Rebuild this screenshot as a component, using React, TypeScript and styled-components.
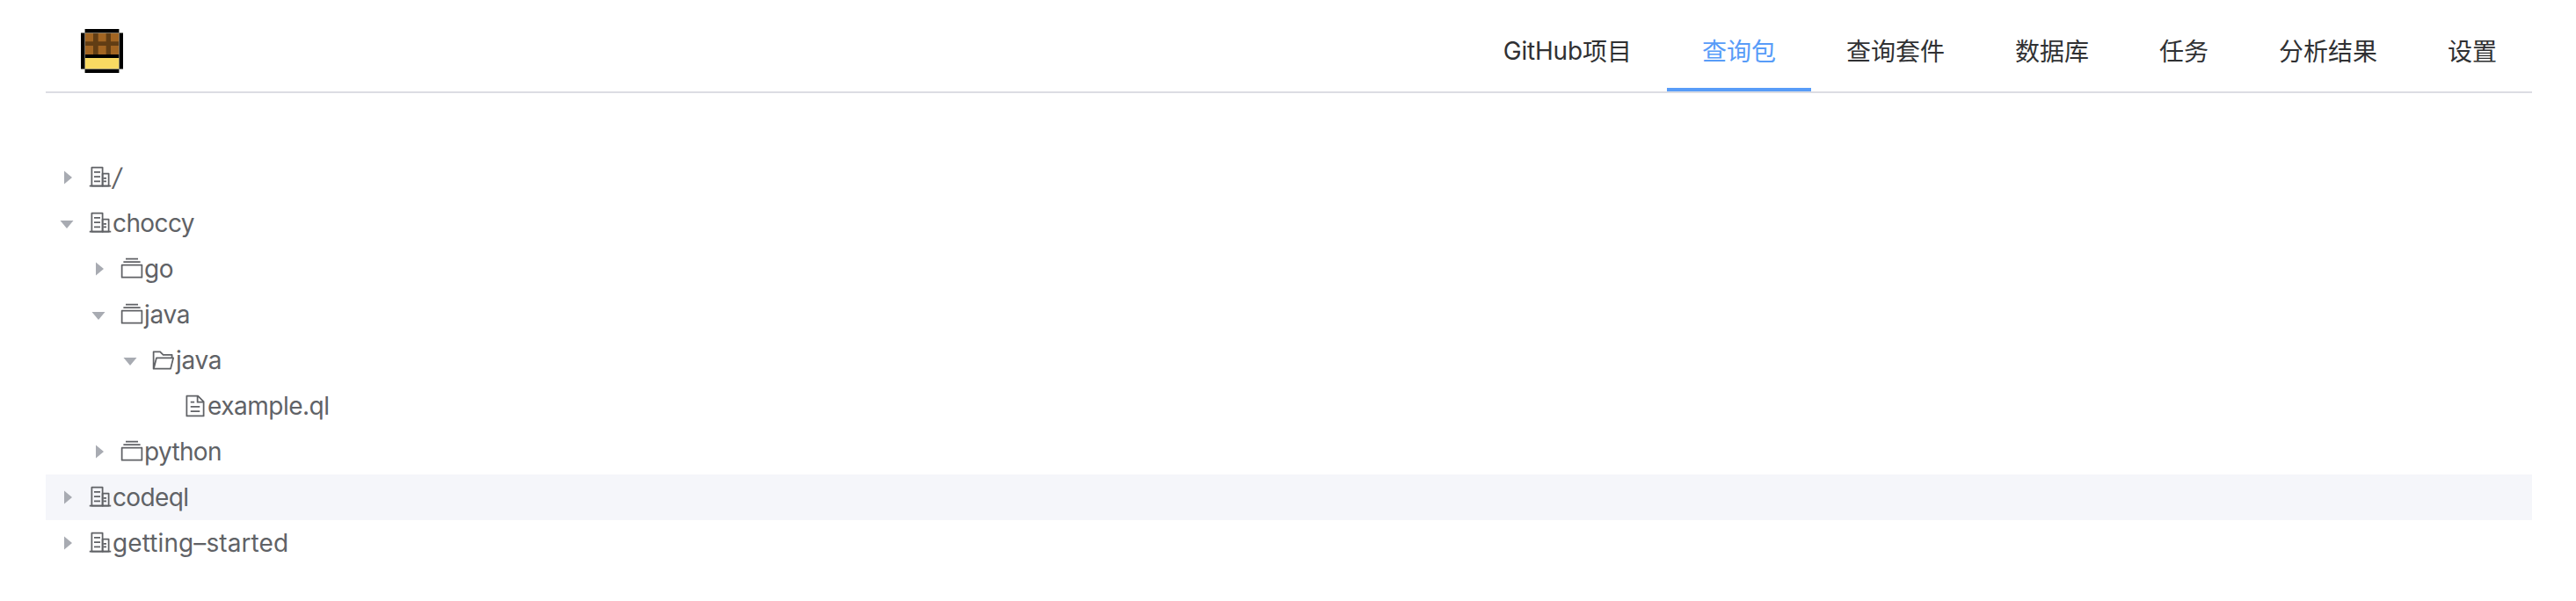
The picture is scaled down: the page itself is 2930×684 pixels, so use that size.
import React from 'react';
import styled, { createGlobalStyle, css } from 'styled-components';

const GlobalStyle = createGlobalStyle`
  body {
    margin: 0;
    background: #fff;
    font-family: Inter, 'Noto Sans CJK SC', sans-serif;
    -webkit-font-smoothing: antialiased;
  }
`;

const Page = styled.div`
  min-height: 684px;
  padding: 0 50px 0 52px;
  box-sizing: border-box;
`;

const Header = styled.header`
  display: flex;
  align-items: stretch;
  justify-content: space-between;
  height: 106px;
  box-sizing: border-box;
  border-bottom: 2px solid #dcdde3;
`;

const Brand = styled.a`
  display: block;
  padding: 33px 0 0 40px;
`;

const Menu = styled.nav`
  display: flex;
`;

const MenuItem = styled.a<{ $active?: boolean }>`
  display: flex;
  align-items: center;
  box-sizing: border-box;
  height: 104px;
  padding: 17px 40px 0;
  border-bottom: 4px solid ${(p) => (p.$active ? '#589cf8' : 'transparent')};
  color: ${(p) => (p.$active ? '#589cf8' : '#303133')};
  font-size: 28px;
  line-height: 40px;
  white-space: nowrap;
`;

const Latin = styled.span`
  letter-spacing: -0.2px;
  padding-bottom: 2px;
`;

const Tree = styled.div`
  margin-top: 70px;
  color: #606266;
`;

const TreeRow = styled.div<{ $level: number; $hover?: boolean }>`
  display: flex;
  align-items: center;
  height: 52px;
  padding-left: ${(p) => p.$level * 36}px;
  background: ${(p) => (p.$hover ? '#f5f6fa' : 'transparent')};
`;

const Caret = styled.svg<{ $open?: boolean; $leaf?: boolean }>`
  flex: none;
  width: 24px;
  height: 24px;
  padding: 12px;
  fill: #a8abb2;
  ${(p) => p.$open && css`transform: rotate(90deg);`}
  ${(p) => p.$leaf && css`visibility: hidden;`}
`;

const NodeIcon = styled.svg`
  flex: none;
  width: 28px;
  height: 28px;
  fill: currentColor;
`;

const Label = styled.span<{ $tracking: number; $slanted?: boolean }>`
  font-size: 28px;
  line-height: 40px;
  letter-spacing: ${(p) => p.$tracking}px;
  font-style: ${(p) => (p.$slanted ? 'italic' : 'normal')};
  white-space: nowrap;
`;

const icons = {
  building: [
    'M192 128v704h384V128zm-32-64h448a32 32 0 0 1 32 32v768a32 32 0 0 1-32 32H160a32 32 0 0 1-32-32V96a32 32 0 0 1 32-32',
    'M256 256h256v64H256zm0 192h256v64H256zm0 192h256v64H256zm384-128h128v64H640zm0 128h128v64H640zM64 832h896v64H64z',
    'M640 384v448h192V384zm-32-64h256a32 32 0 0 1 32 32v512a32 32 0 0 1-32 32H608a32 32 0 0 1-32-32V352a32 32 0 0 1 32-32',
  ],
  files: [
    'M128 384v448h768V384zm-32-64h832a32 32 0 0 1 32 32v512a32 32 0 0 1-32 32H96a32 32 0 0 1-32-32V352a32 32 0 0 1 32-32m64-128h704v64H160zm96-128h512v64H256z',
  ],
  folder: [
    'M878.08 448H241.92l-96 384h636.16zM832 384v-64H485.76L357.504 192H128v448l57.92-231.744A32 32 0 0 1 216.96 384zm-24.96 512H96a32 32 0 0 1-32-32V160a32 32 0 0 1 32-32h287.872l128.384 128H864a32 32 0 0 1 32 32v96h23.04a32 32 0 0 1 31.04 39.744l-112 448A32 32 0 0 1 807.04 896',
  ],
  document: [
    'M832 384H576V128H192v768h640zm-26.496-64L640 154.496V320zM160 64h480l256 256v608a32 32 0 0 1-32 32H160a32 32 0 0 1-32-32V96a32 32 0 0 1 32-32m160 448h384v64H320zm0-192h160v64H320zm0 384h384v64H320z',
  ],
};

interface TreeNode {
  label: string;
  icon: keyof typeof icons;
  level: number;
  tracking: number;
  open?: boolean;
  leaf?: boolean;
  hover?: boolean;
}

const nodes: TreeNode[] = [
  { label: '/', icon: 'building', level: 0, tracking: 0 },
  { label: 'choccy', icon: 'building', level: 0, tracking: -0.6, open: true },
  { label: 'go', icon: 'files', level: 1, tracking: -0.5 },
  { label: 'java', icon: 'files', level: 1, tracking: -0.3, open: true },
  { label: 'java', icon: 'folder', level: 2, tracking: -0.3, open: true },
  { label: 'example.ql', icon: 'document', level: 3, tracking: -0.5, leaf: true },
  { label: 'python', icon: 'files', level: 1, tracking: -0.65 },
  { label: 'codeql', icon: 'building', level: 0, tracking: -0.65, hover: true },
  { label: 'getting–started', icon: 'building', level: 0, tracking: 0.1 },
];

const menu = ['查询包', '查询套件', '数据库', '任务', '分析结果', '设置'];

function Logo() {
  return (
    <svg width="48" height="50" viewBox="0 0 144 150" display="block">
      <path fill="#000" d="M14 0h116v150H14zM0 13h144v124H0z" />
      <path fill="#a26522" d="M14 13h117v74H14z" />
      <path fill="#613d14" d="M42 13h17v74H42zM86 13h16v74H86zM14 43h117v14H14z" />
      <path fill="#f9da62" d="M14 99h117v38H14z" />
      <path
        fill="none"
        stroke="#888880"
        strokeWidth="3"
        strokeOpacity=".75"
        d="M0 13.5h144M0 136.5h144M13.5 0v150M130.5 0v150"
      />
    </svg>
  );
}

export default function App() {
  return (
    <Page>
      <GlobalStyle />
      <Header>
        <Brand>
          <Logo />
        </Brand>
        <Menu>
          <MenuItem>
            <Latin>GitHub</Latin>项目
          </MenuItem>
          {menu.map((label) => (
            <MenuItem key={label} $active={label === '查询包'}>
              {label}
            </MenuItem>
          ))}
        </Menu>
      </Header>
      <Tree>
        {nodes.map((node, i) => (
          <TreeRow key={i} $level={node.level} $hover={node.hover}>
            <Caret viewBox="0 0 1024 1024" $open={node.open} $leaf={node.leaf}>
              <path d="M384 192v640l384-320.064z" />
            </Caret>
            <NodeIcon viewBox="0 0 1024 1024">
              {icons[node.icon].map((d) => (
                <path key={d} d={d} />
              ))}
            </NodeIcon>
            <Label $tracking={node.tracking} $slanted={node.label === '/'}>
              {node.label}
            </Label>
          </TreeRow>
        ))}
      </Tree>
    </Page>
  );
}
